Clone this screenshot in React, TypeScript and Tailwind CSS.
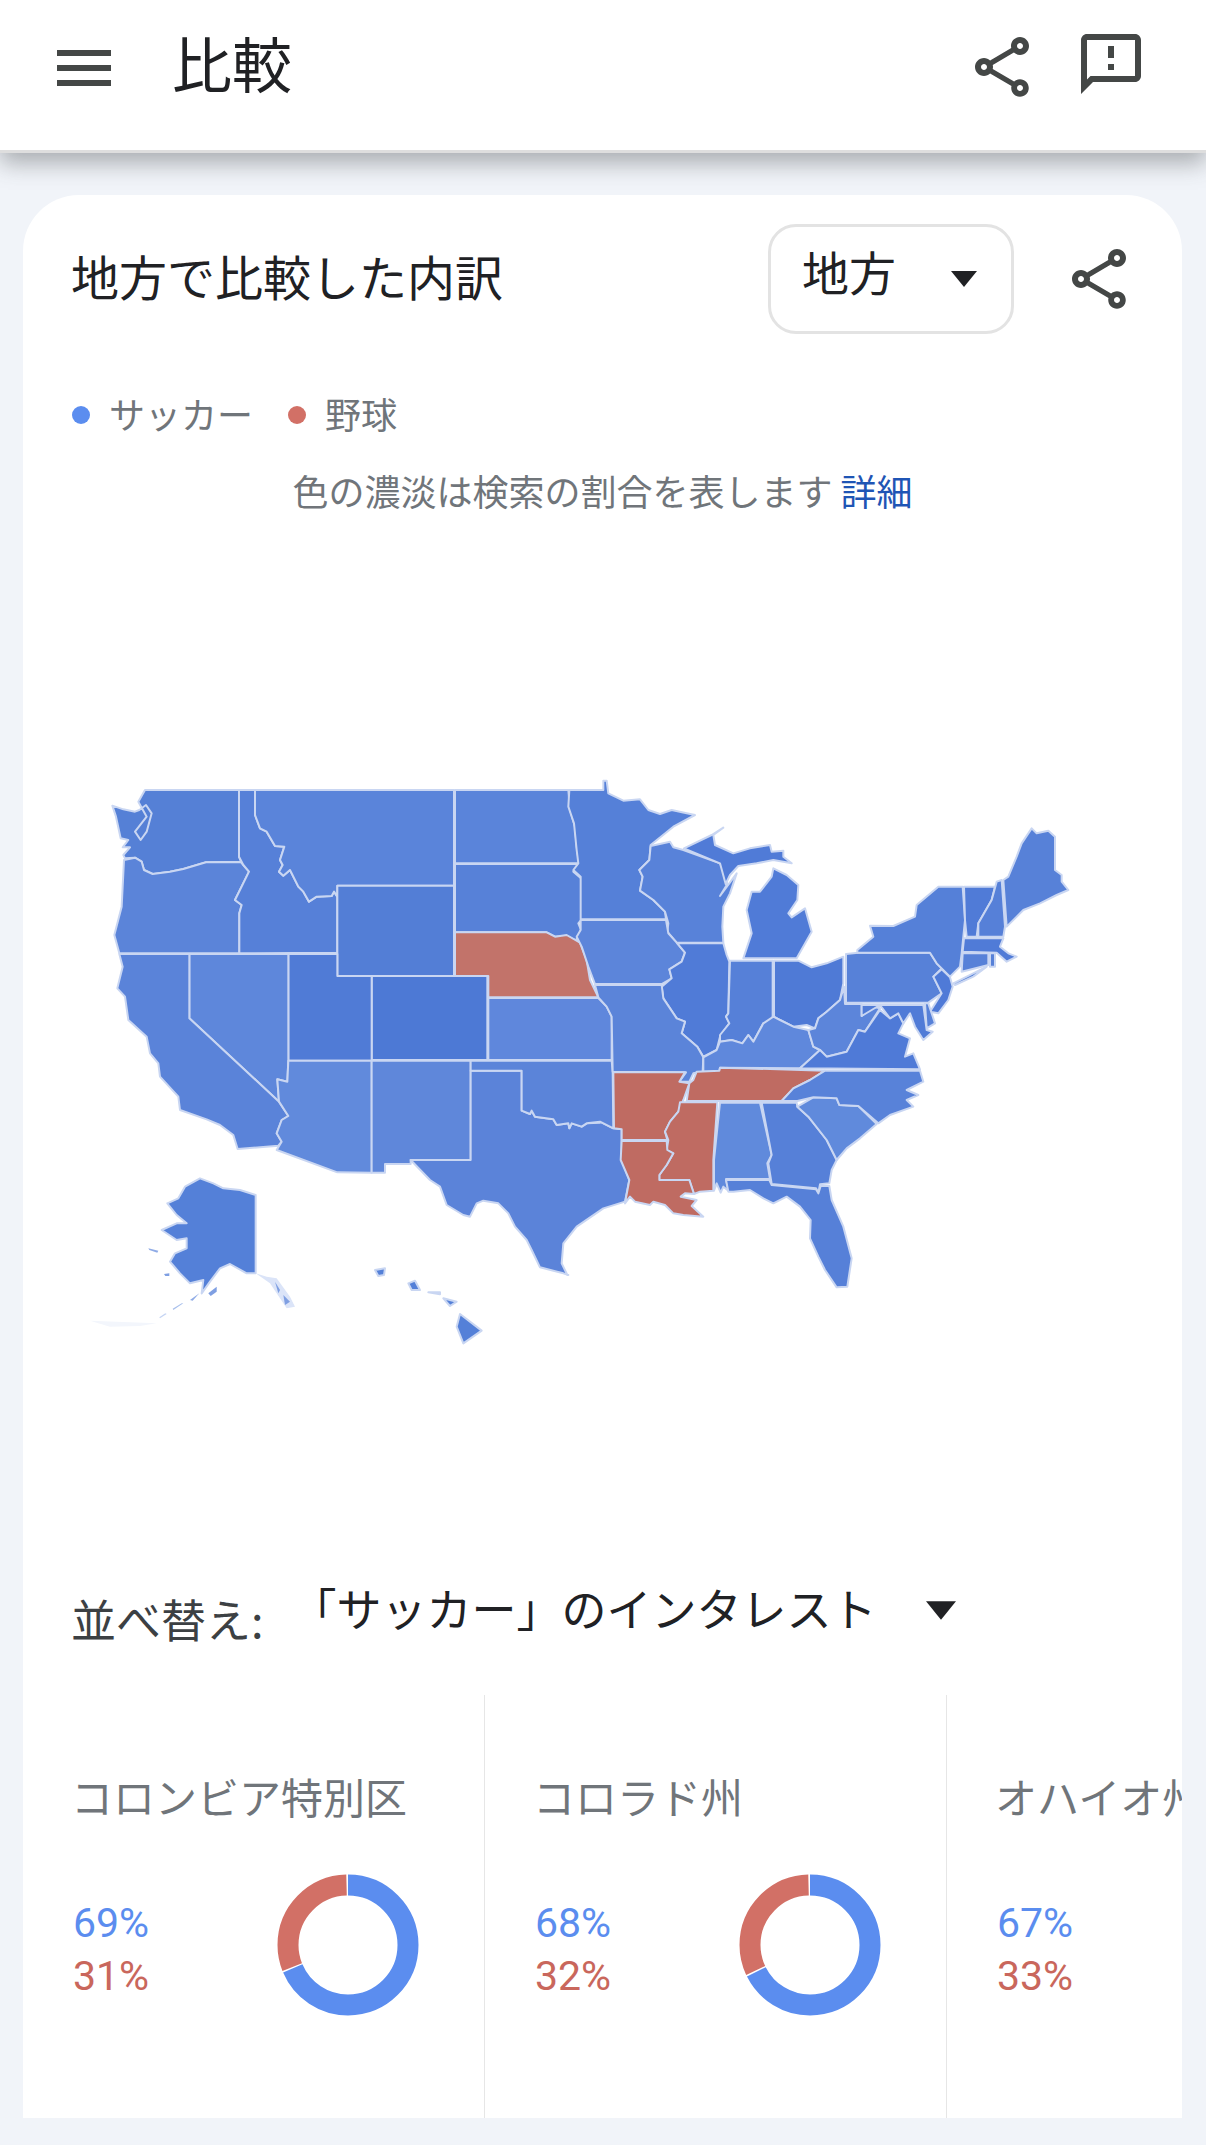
const JP = "font-['Noto_Sans_CJK_JP','Noto_Sans',sans-serif]";

// map points are [frame, "x,y x,y ..."], the frames being 3x crops of the picture
const Z2: [number, number] = [0, 0];
const Z3: [number, number] = [1440, 0];
const Z4: [number, number] = [0, 900];
const Z5: [number, number] = [1440, 720];

type Seg = [[number, number], string];
type State = { fill: string; segs: Seg[] };

const RED = "#bf6b62";

const states: State[] = [
  // WA
  { fill: "#5580d6", segs: [[Z2, "195,90 477,90 477,290 483,305 378,307 310,327 270,335 218,342 192,330 185,305 165,293 135,295 130,285 150,262 128,262 145,240 122,235 108,170 97,137 130,148 165,155 178,150 198,135 215,160 200,215 182,240 165,215 200,170 175,125"]] },
  // OR
  { fill: "#5b84d9", segs: [[Z2, "118,580 103,525 125,440 132,300 165,293 185,305 192,330 218,342 270,335 310,327 378,307 483,307 507,335 465,420 485,435 478,460 478,580"]] },
  // ID
  { fill: "#5680d8", segs: [[Z2, "477,90 525,90 525,165 540,205 560,215 585,258 613,260 600,300 608,315 597,335 610,347 630,330 655,380 670,395 687,425 710,410 755,408 762,395 772,410 772,578 478,580 478,460 485,435 465,420 507,335 490,315 477,290"]] },
  // MT
  { fill: "#5a84da", segs: [[Z2, "525,90 1122,90 1122,377 772,377 772,410 762,395 755,408 710,410 687,425 670,395 655,380 630,330 610,347 597,335 608,315 600,300 613,260 585,258 560,215 540,205 525,165"]] },
  // WY
  { fill: "#537ed6", segs: [[Z2, "772,377 1122,377 1122,648 772,648"]] },
  // CO
  { fill: "#4d79d5", segs: [[Z2, "875,648 1222,648 1222,900 875,900"]] },
  // UT
  { fill: "#507bd6", segs: [[Z2, "625,582 772,582 772,648 875,648 875,902 625,902"]] },
  // NV
  { fill: "#5e87db", segs: [[Z2, "328,582 625,582 625,902 622,965 592,958 597,1025 328,775"]] },
  // CA
  { fill: "#5a83d9", segs: [[Z2, "118,582 328,582 328,775 597,1025 625,1068 605,1080 590,1120 605,1145 595,1157 473,1167 460,1125 420,1095 380,1078 300,1050 295,1010 240,950 235,910 210,880 200,830 145,780 135,710 112,685 128,620"]] },
  // AZ
  { fill: "#618adc", segs: [[Z2, "625,902 875,902 875,1238 772,1237 590,1170 605,1145 590,1120 605,1080 625,1068 597,1025 592,958 622,965"]] },
  // NM
  { fill: "#5f87da", segs: [[Z2, "875,902 1172,902 1172,1200 992,1200 992,1212 915,1212 915,1238 875,1238"]] },
  // TX
  { fill: "#5b83d9", segs: [
    [Z2, "1172,932 1325,932 1325,1052 1350,1062 1355,1052 1365,1070 1420,1078 1430,1095 1465,1090 1468,1105 1475,1090 1505,1100 1520,1090 1560,1088"],
    [Z5, "120,365 160,385 185,388 185,480 208,540 195,605 130,625 50,680 10,730 5,790 22,825"],
    [Z4, "1465,645 1450,640 1380,622 1355,570 1340,540 1305,500 1285,460 1255,430 1210,422 1190,430 1170,470 1150,465 1100,435 1080,380 1050,360 992,300 1172,300"],
  ] },
  // ND
  { fill: "#5a84da", segs: [[Z2, "1125,90 1465,90 1470,150 1485,200 1490,260 1497,310 1125,310"]] },
  // SD
  { fill: "#5781d8", segs: [[Z2, "1125,312 1497,312 1480,335 1503,355 1503,480 1495,490 1503,510 1490,535 1500,548 1460,528 1425,530 1400,517 1125,517"]] },
  // NE
  { fill: "#c2736a", segs: [[Z2, "1125,517 1400,517 1425,530 1460,525 1500,548 1520,600 1530,660 1555,712 1225,712 1225,648 1125,648"]] },
  // KS
  { fill: "#5f87dc", segs: [[Z2, "1225,714 1555,714 1580,740 1595,770 1595,900 1225,900"]] },
  // OK
  { fill: "#5b84d9", segs: [[Z2, "1172,902 1595,902 1598,935 1600,1105 1560,1085 1520,1090 1505,1100 1475,1090 1468,1105 1465,1090 1430,1095 1420,1078 1365,1070 1355,1052 1350,1062 1325,1052 1325,932 1172,932"]] },
  // MN
  { fill: "#5580d8", segs: [[Z3, "28,90 130,90 130,62 140,62 145,100 190,122 240,118 265,150 300,162 335,150 380,160 405,165 340,200 272,255 268,300 238,330 248,350 240,392 280,420 315,455 318,478 62,478 62,350 40,330 55,310 50,270 42,190 25,140"]] },
  // WI
  { fill: "#5882d9", segs: [[Z3, "272,258 330,245 340,262 370,270 480,310 497,345 502,372 480,408 530,340 510,400 490,440 487,500 490,548 350,548 322,515 325,490 315,455 280,420 240,392 248,350 238,330 268,300"]] },
  // MI upper
  { fill: "#507bd7", segs: [[Z3, "372,265 455,225 490,203 460,225 465,255 520,280 570,265 630,255 635,275 670,272 670,290 695,310 640,300 590,310 535,318 510,345 497,372 480,310"]] },
  // MI lower
  { fill: "#507bd7", segs: [[Z3, "640,325 680,345 715,375 712,420 685,460 695,472 735,445 755,515 710,595 550,595 575,520 560,450 575,395 600,395 635,350"]] },
  // IA
  { fill: "#5c85da", segs: [[Z3, "62,480 318,480 325,520 350,548 375,578 365,605 328,628 335,655 305,672 105,672 85,620 65,560 50,530 62,510"]] },
  // IL
  { fill: "#507bd7", segs: [[Z3, "352,550 490,550 500,585 508,605 505,760 498,770 508,790 480,830 470,870 430,890 412,860 365,820 375,785 350,775 310,715 305,680 335,655 328,628 365,605 375,578"]] },
  // IN
  { fill: "#5680d8", segs: [[Z3, "510,602 638,602 638,785 610,790 580,845 565,825 547,850 515,840 480,845 480,825 508,790 498,770 505,760"]] },
  // OH
  { fill: "#4f7ad6", segs: [[Z3, "642,602 715,602 755,622 800,610 850,590 850,670 840,720 800,755 775,775 765,805 740,795 700,800 660,780 642,770"]] },
  // MO
  { fill: "#5b84d9", segs: [[Z3, "105,675 305,675 310,715 350,775 375,785 365,820 412,860 430,892 428,935 400,940 388,965 358,965 378,937 158,935 155,770 140,740 115,712"]] },
  // KY
  { fill: "#5f88dc", segs: [[Z3, "430,935 430,892 470,870 480,845 515,840 547,850 565,825 580,845 610,790 640,770 660,780 700,800 745,810 760,860 780,870 720,925 480,923 478,935"]] },
  // WV
  { fill: "#5c85da", segs: [[Z3, "745,810 765,805 775,775 800,755 840,720 852,680 855,732 905,732 905,768 940,740 960,745 915,815 895,810 860,875 800,890 780,870 760,860"]] },
  // VA
  { fill: "#4f7ad7", segs: [[Z3, "720,925 780,870 800,890 860,875 895,810 915,815 960,750 990,775 1015,760 1030,790 1015,820 1050,835 1035,890 1060,880 1080,928"]] },
  // PA
  { fill: "#5781d8", segs: [[Z3, "858,582 895,578 1110,578 1130,610 1145,625 1120,650 1145,700 1105,728 858,728"]] },
  // NY
  { fill: "#5580d8", segs: [[Z3, "892,570 940,530 930,497 1000,498 1065,470 1070,435 1135,380 1208,380 1215,480 1205,580 1200,620 1170,650 1145,625 1130,610 1110,578 892,578"]] },
  { fill: "#5580d8", segs: [[Z3, "1180,670 1280,620 1240,650 1185,675"]] },
  // NJ
  { fill: "#4f7ad7", segs: [[Z3, "1145,628 1170,652 1178,680 1165,720 1135,760 1110,755 1145,700 1120,650"]] },
  // DE
  { fill: "#5781d8", segs: [[Z3, "1095,730 1105,730 1125,790 1100,805"]] },
  // MD
  { fill: "#507bd7", segs: [[Z3, "905,735 1090,735 1100,810 1118,815 1090,840 1065,800 1050,760 1030,790 1015,760 990,775 960,735 905,768"]] },
  // VT
  { fill: "#507bd7", segs: [[Z3, "1212,380 1305,380 1295,420 1255,490 1250,530 1220,530 1215,480"]] },
  // NH
  { fill: "#5680d8", segs: [[Z3, "1310,365 1325,360 1335,500 1330,530 1255,530 1255,490 1295,420"]] },
  // ME
  { fill: "#5781d8", segs: [[Z3, "1330,360 1345,350 1370,290 1385,250 1415,205 1430,220 1465,212 1485,230 1485,330 1505,345 1505,365 1525,390 1490,405 1440,430 1390,450 1340,500"]] },
  // MA
  { fill: "#507bd7", segs: [[Z3, "1212,535 1330,535 1320,560 1345,580 1370,590 1340,605 1310,578 1208,575"]] },
  // CT
  { fill: "#5781d8", segs: [[Z3, "1208,580 1285,580 1285,615 1205,635"]] },
  // RI
  { fill: "#5781d8", segs: [[Z3, "1290,580 1305,580 1305,620 1290,620"]] },
  // AR
  { fill: RED, segs: [[Z5, "160,217 375,217 358,245 388,250 370,300 355,335 330,365 315,395 322,420 185,420 185,388 162,385"]] },
  // TN
  { fill: RED, segs: [[Z5, "410,215 478,212 480,203 795,212 750,240 700,265 665,303 380,303 388,250 400,240"]] },
  // MS
  { fill: RED, segs: [[Z5, "360,307 472,307 460,480 460,572 420,575 402,582 388,540 298,540 298,525 320,495 340,460 320,450 325,420 315,395 330,365 355,335"]] },
  // LA
  { fill: RED, segs: [[Z5, "185,423 320,423 322,450 340,460 320,495 298,525 298,540 388,540 402,582 375,580 362,590 410,600 395,618 430,650 370,645 340,640 315,615 280,605 270,615 225,605 210,590 195,610 208,540 182,480"]] },
  // AL
  { fill: "#608adc", segs: [[Z5, "480,308 600,308 635,465 622,490 630,537 498,537 505,572 490,560 482,578 470,550 462,572 462,480"]] },
  // GA
  { fill: "#5680d8", segs: [[Z5, "605,308 710,308 712,320 745,350 800,420 830,480 815,510 808,550 780,553 775,578 768,565 635,552 625,490 635,465"]] },
  // FL
  { fill: "#5680d8", segs: [[Z5, "498,540 628,540 635,555 768,568 775,580 782,558 808,558 815,600 850,680 875,775 862,860 830,862 795,810 775,770 750,715 752,660 720,620 680,590 640,610 610,595 570,570 520,575 505,575"]] },
  // SC
  { fill: "#608adc", segs: [[Z5, "712,320 760,292 830,295 838,315 895,318 950,372 900,415 860,445 830,480 800,420 745,350"]] },
  // NC
  { fill: "#5882d9", segs: [[Z5, "712,303 665,303 700,265 750,240 795,212 1080,212 1090,245 1040,270 1075,285 1040,300 1060,320 990,345 955,370 895,318 838,315 830,295 760,292"]] },
  // AK
  { fill: "#5480d8", segs: [[Z4, "360,355 400,370 430,385 480,390 527,405 527,640 500,640 450,612 420,625 390,665 365,700 370,660 330,670 300,640 270,605 285,580 320,565 320,535 290,540 245,510 290,490 320,490 290,465 262,430 295,415 315,380"]] },
  // HI
  { fill: "#5480d8", segs: [[Z4, "885,630 915,625 912,645 895,648"]] },
  { fill: "#5480d8", segs: [[Z4, "985,670 1005,662 1020,690 995,690"]] },
  { fill: "#5480d8", segs: [[Z4, "1045,697 1080,697 1080,703"]] },
  { fill: "#5480d8", segs: [[Z4, "1090,715 1130,725 1110,738"]] },
  { fill: "#5480d8", segs: [[Z4, "1140,762 1205,812 1150,850 1130,800"]] },
];

const toPoints = (segs: Seg[]) =>
  segs
    .map(([[dx, dy], pts]) =>
      pts
        .split(" ")
        .map((p) => {
          const [x, y] = p.split(",").map(Number);
          return `${x + dx},${y + dy}`;
        })
        .join(" ")
    )
    .join(" ");

const UsMap = () => (
  <svg viewBox="0 30 3000 1770" className="ml-[57px] mt-[255px] block h-[590px] w-[1000px]">
    {states.map((s, i) => (
      <polygon key={i} points={toPoints(s.segs)} fill={s.fill} stroke="#c9d6f2" strokeWidth="6" strokeLinejoin="round" />
    ))}
    {/* panhandle and the aleutian specks */}
    <g transform="translate(0 900)" stroke="none">
      <polygon points="527,640 560,650 590,655 630,710 645,740 620,745 590,700 570,670" fill="#dbe4f8" />
      <polygon points="585,665 600,690 595,700" fill="#7f9fe2" />
      <polygon points="610,705 630,725 615,735" fill="#7f9fe2" />
      <polygon points="205,565 235,572 232,578 208,570" fill="#8fabe6" />
      <polygon points="252,642 268,640 268,648 256,648" fill="#7f9fe2" />
      <polygon points="385,700 410,680 410,695 392,708" fill="#7f9fe2" />
      <polygon points="358,700 338,722 330,720" fill="#8fabe6" />
      <polygon points="310,730 280,750 278,746 305,730" fill="#a9c0ec" />
      <polygon points="260,762 240,775 238,772 256,760" fill="#c5d4f3" />
      <polygon points="30,782 230,790 180,798 90,800" fill="#f3f6fc" />
    </g>
  </svg>
);

const ShareIcon = ({ className }: { className: string }) => (
  <svg viewBox="0 0 24 24" className={className} fill="#444746">
    <path d="M18 16.08c-.76 0-1.44.3-1.96.77L8.91 12.7c.05-.23.09-.46.09-.7s-.04-.47-.09-.7l7.05-4.11c.54.5 1.25.81 2.04.81 1.66 0 3-1.34 3-3s-1.34-3-3-3-3 1.34-3 3c0 .24.04.47.09.7L8.04 9.81C7.5 9.31 6.79 9 6 9c-1.66 0-3 1.34-3 3s1.34 3 3 3c.79 0 1.5-.31 2.04-.81l7.12 4.16c-.05.21-.08.43-.08.65 0 1.61 1.31 2.92 2.92 2.92 1.61 0 2.92-1.31 2.92-2.92s-1.31-2.92-2.92-2.92zM18 4c.55 0 1 .45 1 1s-.45 1-1 1-1-.45-1-1 .45-1 1-1zM6 13c-.55 0-1-.45-1-1s.45-1 1-1 1 .45 1 1-.45 1-1 1zm12 7.02c-.55 0-1-.45-1-1s.45-1 1-1 1 .45 1 1-.45 1-1 1z" />
  </svg>
);

const Caret = ({ className }: { className: string }) => (
  <svg viewBox="0 0 26 16" className={className} fill="#202124">
    <path d="M0 0h26L13 16z" />
  </svg>
);

const Donut = ({ blue }: { blue: number }) => (
  <svg viewBox="0 0 142 142" className="h-[142px] w-[142px] shrink-0 -rotate-90">
    <circle cx="71" cy="71" r="60" fill="none" stroke="#5b8def" strokeWidth="21" pathLength={100} strokeDasharray={`${blue - 0.4} ${100.4 - blue}`} />
    <circle cx="71" cy="71" r="60" fill="none" stroke="#d27066" strokeWidth="21" pathLength={100} strokeDasharray={`${99.6 - blue} ${blue + 0.4}`} strokeDashoffset={-blue} />
  </svg>
);

const regions = [
  { name: "コロンビア特別区", blue: 69, red: 31 },
  { name: "コロラド州", blue: 68, red: 32 },
  { name: "オハイオ州", blue: 67, red: 33 },
];

export default function App() {
  return (
    <div className={`${JP} h-[2145px] w-[1206px] overflow-hidden bg-[#f1f4f9]`}>
      {/* top bar */}
      <header className="relative z-10 flex h-[153px] items-start border-b-[3px] border-[#dedede] bg-white pl-[48px] shadow-[0_10px_22px_rgba(60,64,67,0.4)]">
        <svg viewBox="0 0 24 24" className="mt-[32px] h-[72px] w-[72px]" fill="#444746">
          <path d="M3 18h18v-2H3v2zm0-5h18v-2H3v2zm0-7v2h18V6H3z" />
        </svg>
        <h1 className="ml-[52px] mt-[20px] text-[60px] leading-[84px] text-[#202124]">比較</h1>
        <ShareIcon className="ml-auto mt-[31px] h-[72px] w-[72px]" />
        <svg viewBox="0 0 24 24" className="ml-[37px] mr-[59px] mt-[28px] h-[72px] w-[72px]" fill="#444746">
          <path d="M20 2H4c-1.1 0-1.99.9-1.99 2L2 22l4-4h14c1.1 0 2-.9 2-2V4c0-1.1-.9-2-2-2zm0 14H5.17l-.59.59-.58.58V4h16v12zM11 12h2v2h-2zm0-6h2v4h-2z" />
        </svg>
      </header>

      {/* card */}
      <main className="ml-[23px] mt-[42px] h-[1923px] w-[1159px] overflow-hidden rounded-t-[56px] bg-white">
        <div className="flex items-start pl-[48px] pt-[29px]">
          <h2 className="mt-[16px] text-[48px] leading-[70px] text-[#202124]">地方で比較した内訳</h2>
          <div className="ml-auto flex h-[110px] w-[246px] items-center rounded-[28px] border-[3px] border-[#e3e3e3] pb-[16px] pl-[31px]">
            <span className="text-[47px] leading-[60px] text-[#202124]">地方</span>
            <Caret className="ml-[55px] mt-[16px] h-[16px] w-[26px]" />
          </div>
          <ShareIcon className="ml-[49px] mr-[47px] mt-[19px] h-[72px] w-[72px]" />
        </div>

        <div className="mt-[59px] flex h-[40px] items-center pl-[49px] text-[36px] leading-[40px] text-[#70757a]">
          <span className="mt-[3px] h-[18px] w-[18px] rounded-full bg-[#5b8def]" />
          <span className="ml-[19px]">サッカー</span>
          <span className="ml-[35px] mt-[3px] h-[18px] w-[18px] rounded-full bg-[#d27066]" />
          <span className="ml-[19px]">野球</span>
        </div>

        <p className="mt-[32px] h-[50px] text-center text-[36px] leading-[50px] text-[#70757a]">
          色の濃淡は検索の割合を表します <span className="text-[#1f55b5]">詳細</span>
        </p>

        <UsMap />

        <div className="mt-[225px] flex h-[65px] items-start pl-[48px]">
          <span className="mt-[4px] text-[45px] leading-[60px] text-[#3c4043]">並べ替え:</span>
          <span className="ml-[28px] mt-[-7px] text-[45px] leading-[60px] text-[#202124]">「サッカー」のインタレスト</span>
          <Caret className="ml-[49px] mt-[16px] h-[19px] w-[30px]" />
        </div>

        {/* region cards */}
        <div className="mt-[45px] flex h-[423px]">
          {regions.map((r) => (
            <section key={r.name} className="w-[462px] shrink-0 border-r border-[#e6e6e6] pl-[48px]">
              <h3 className="mt-[73px] whitespace-nowrap text-[42px] leading-[56px] text-[#70757a]">{r.name}</h3>
              <div className="mt-[50px] flex items-center">
                <div className="ml-[2px] mt-[9px] font-['Roboto',sans-serif] text-[41px] leading-[53px]">
                  <div className="text-[#5b8def]">{r.blue}%</div>
                  <div className="text-[#c9675c]">{r.red}%</div>
                </div>
                <div className="ml-[128px]">
                  <Donut blue={r.blue} />
                </div>
              </div>
            </section>
          ))}
        </div>
      </main>
    </div>
  );
}
